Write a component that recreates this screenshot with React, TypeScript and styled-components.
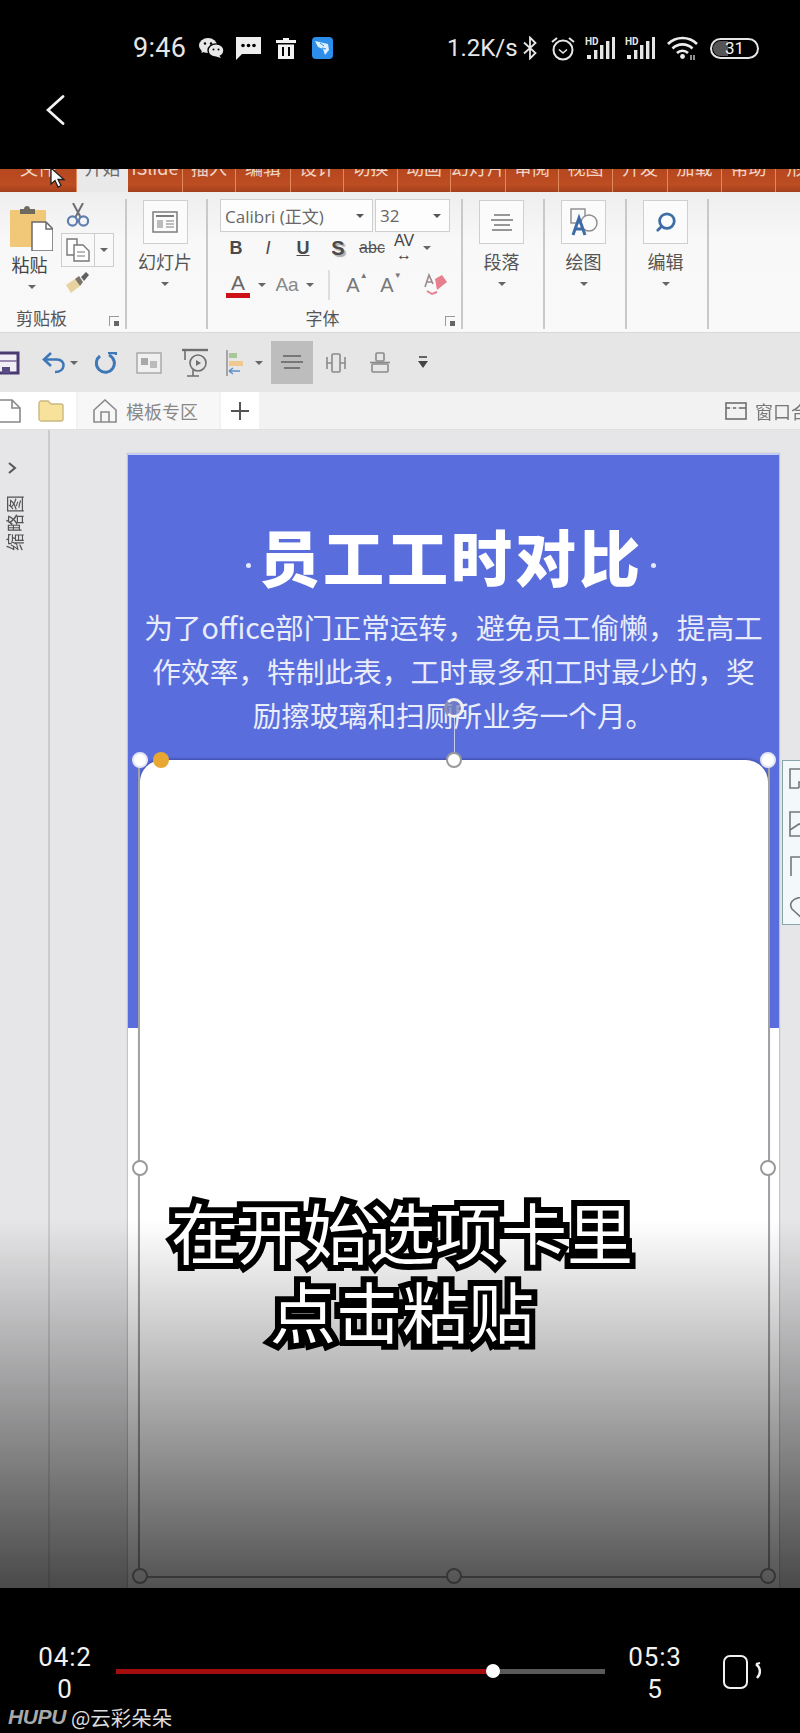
import styled, { createGlobalStyle } from "styled-components";
import { Search } from "lucide-react";

const GlobalStyle = createGlobalStyle`
  html, body {
    margin: 0;
    padding: 0;
    background: #000;
    font-family: "Noto Sans CJK SC", "Noto Sans", sans-serif;
  }
`;

const Page = styled.div`
  width: 800px;
  height: 1733px;
  background: #000;
  display: flex;
  flex-direction: column;
  overflow: hidden;
`;

/* ---------- phone header ---------- */

const Header = styled.div`
  height: 169px;
  flex: none;
  padding-top: 36px;
  box-sizing: border-box;
`;

const StatusBar = styled.div`
  height: 24px;
  display: flex;
  align-items: center;
  padding-left: 133px;
  color: #e6e6e6;
  font-family: Roboto, sans-serif;
`;

const StatusTime = styled.span`
  font-size: 27px;
  width: 66px;
  letter-spacing: 0.3px;
`;

const StatusGap = styled.span<{ $w: number }>`
  width: ${(p) => p.$w}px;
  flex: none;
`;

const StatusSpeed = styled.span`
  font-size: 24px;
  width: 76px;
  white-space: nowrap;
`;

const BackRow = styled.div`
  height: 40px;
  margin-top: 30px;
  padding-left: 46px;
  display: flex;
  align-items: center;
`;

/* ---------- video frame ---------- */

const VideoFrame = styled.div`
  height: 1419px;
  flex: none;
  position: relative;
  overflow: hidden;
  display: flex;
  flex-direction: column;
  background: #e6e5e7;
`;

const Blurred = styled.div`
  display: flex;
  flex-direction: column;
  flex: 1;
  min-height: 0;
  filter: blur(0.7px);
`;

const TabStrip = styled.div`
  height: 23px;
  flex: none;
  display: flex;
  overflow: hidden;
  position: relative;
  background: linear-gradient(180deg, #b5471f 0%, #bd4d22 70%, #a2401c 100%);
`;

const Tab = styled.div<{ $w: number; $active?: boolean }>`
  width: ${(p) => p.$w}px;
  flex: none;
  box-sizing: border-box;
  text-align: center;
  font-size: 18px;
  line-height: 22px;
  color: ${(p) => (p.$active ? "#6a6a6a" : "#f0d5c6")};
  background: ${(p) => (p.$active ? "#e9e9e9" : "transparent")};
  border-right: ${(p) => (p.$active ? "none" : "1px solid #e08a5c")};
  white-space: nowrap;
  overflow: hidden;

  span {
    display: block;
    margin-top: -13px;
  }
`;

const Ribbon = styled.div`
  height: 141px;
  flex: none;
  display: flex;
  background: linear-gradient(180deg, #eeeeee 0%, #f8f8f8 35%, #f9f9f9 100%);
  border-bottom: 1px solid #d8d8d8;
  box-sizing: border-box;
  padding-top: 7px;
`;

const Group = styled.div<{ $w: number }>`
  width: ${(p) => p.$w}px;
  height: 130px;
  flex: none;
  position: relative;
  box-sizing: border-box;
  border-right: 2px solid #c9c9c9;
  display: flex;
  flex-direction: column;
`;

const GroupLabel = styled.div<{ $inset: number }>`
  position: absolute;
  left: 0;
  right: ${(p) => p.$inset}px;
  bottom: -2px;
  height: 26px;
  line-height: 26px;
  text-align: center;
  font-size: 17px;
  color: #555;
`;

const Launcher = styled.div`
  position: absolute;
  right: 6px;
  bottom: 3px;
  width: 9px;
  height: 9px;
  border-left: 1.5px solid #999;
  border-top: 1.5px solid #999;

  &::after {
    content: "";
    position: absolute;
    right: 0;
    bottom: 0;
    width: 5px;
    height: 5px;
    background: #666;
  }
`;

const BigCommand = styled.div`
  display: flex;
  flex-direction: column;
  align-items: center;
  padding: 1px 3px 0 0;
`;

const CommandBox = styled.div`
  width: 45px;
  height: 44px;
  box-sizing: border-box;
  border: 1.5px solid #cfcfcf;
  background: #fbfbfb;
  display: flex;
  align-items: center;
  justify-content: center;
`;

const CommandText = styled.div`
  font-size: 18px;
  line-height: 24px;
  margin-top: 5px;
  color: #555;
`;

const Caret = styled.div<{ $color?: string }>`
  width: 0;
  height: 0;
  border-left: 4px solid transparent;
  border-right: 4px solid transparent;
  border-top: 4.5px solid ${(p) => p.$color || "#666"};
`;

const CommandCaret = styled(Caret)`
  margin-top: 9px;
`;

const ClipboardBody = styled.div`
  display: flex;
  padding-left: 10px;
`;

const PasteColumn = styled.div`
  width: 43px;
  display: flex;
  flex-direction: column;
  align-items: center;
  padding-top: 6px;
`;

const PasteText = styled.div`
  font-size: 18px;
  line-height: 24px;
  margin: 1px 0 0 -4px;
  color: #444;
  white-space: nowrap;
`;

const PasteCaret = styled(Caret)`
  margin-top: 9px;
`;

const ClipTools = styled.div`
  margin-left: 8px;
  display: flex;
  flex-direction: column;
  align-items: flex-start;
  padding-top: 4px;
`;

const ToolIcon = styled.div`
  height: 22px;
  padding-left: 5px;
`;

const CopySplit = styled.div`
  margin-top: 8px;
  display: flex;
  height: 34px;
  border: 1.5px solid #cdcdcd;
  box-sizing: border-box;
  background: #f9f9f9;
`;

const CopyPart = styled.div`
  width: 32px;
  display: flex;
  align-items: center;
  justify-content: center;
  border-right: 1.5px solid #cdcdcd;
`;

const CopyCaret = styled.div`
  width: 18px;
  display: flex;
  align-items: center;
  justify-content: center;
`;

const BrushIcon = styled.div`
  margin-top: 5px;
  padding-left: 4px;
`;

const FontBody = styled.div`
  padding-left: 12px;
  display: flex;
  flex-direction: column;
`;

const SelectRow = styled.div`
  display: flex;
  gap: 2px;
  height: 33px;
`;

const SelectBox = styled.div<{ $w: number }>`
  width: ${(p) => p.$w}px;
  box-sizing: border-box;
  border: 1.5px solid #cfcfcf;
  background: #fdfdfd;
  display: flex;
  align-items: center;
  justify-content: space-between;
  padding: 0 8px 0 4px;
  font-family: "Open Sans", "Noto Sans CJK SC", sans-serif;
  font-size: 17px;
  color: #666;
  white-space: nowrap;
`;

const ToolRow = styled.div<{ $h: number }>`
  display: flex;
  align-items: center;
  height: ${(p) => p.$h}px;
`;

const ToolCell = styled.div<{ $w: number; $bold?: boolean; $italic?: boolean; $under?: boolean }>`
  width: ${(p) => p.$w}px;
  flex: none;
  display: flex;
  align-items: center;
  justify-content: center;
  font-family: "Liberation Sans", sans-serif;
  font-size: 18px;
  color: #4a4a4a;
  font-weight: ${(p) => (p.$bold ? 700 : 400)};
  font-style: ${(p) => (p.$italic ? "italic" : "normal")};
  text-decoration: ${(p) => (p.$under ? "underline" : "none")};
`;

const ShadowS = styled.span`
  text-shadow: 2px 2px 1px #aaa;
  font-size: 20px;
`;

const Strike = styled.span`
  text-decoration: line-through;
  font-size: 16px;
  color: #555;
`;

const ColorA = styled.div`
  display: flex;
  flex-direction: column;
  align-items: center;
  font-size: 21px;
  line-height: 20px;
  color: #666;
`;

const ColorBar = styled.div`
  width: 24px;
  height: 5px;
  background: #cc1216;
`;

const AaText = styled.span`
  font-size: 19px;
  color: #888;
`;

const Divider = styled.div`
  width: 2px;
  height: 30px;
  background: #dedede;
`;

const Grow = styled.span`
  position: relative;
  font-size: 20px;
  color: #777;

  sup {
    position: absolute;
    top: -3px;
    right: -8px;
    font-size: 8px;
    line-height: 10px;
  }
`;

const AvText = styled.span`
  font-size: 16px;
  line-height: 14px;
  color: #444;
  display: flex;
  flex-direction: column;
  align-items: center;
`;

const QuickBar = styled.div`
  height: 59px;
  flex: none;
  background: #e6e6e7;
  display: flex;
  align-items: center;
`;

const QuickItem = styled.div<{ $w: number; $selected?: boolean }>`
  width: ${(p) => p.$w}px;
  flex: none;
  height: 43px;
  display: flex;
  align-items: center;
  justify-content: center;
  background: ${(p) => (p.$selected ? "#bdbdbd" : "transparent")};
`;

const DocTabs = styled.div`
  height: 38px;
  flex: none;
  display: flex;
  background: #f2f2f2;
  border-bottom: 1px solid #e0e0e0;
  box-sizing: border-box;
`;

const DocIcons = styled.div`
  width: 76px;
  background: #fff;
  display: flex;
  align-items: center;
  gap: 16px;
  flex: none;
  padding-left: 0;
`;

const DocTab = styled.div`
  width: 141px;
  margin-left: 2px;
  background: #f7f7f7;
  display: flex;
  align-items: center;
  padding-left: 15px;
  gap: 9px;
  box-sizing: border-box;
  flex: none;
  font-size: 18px;
  color: #888;
`;

const PlusTab = styled.div`
  width: 38px;
  margin-left: 2px;
  background: #fff;
  flex: none;
  display: flex;
  align-items: center;
  justify-content: center;
`;

const WindowTab = styled.div`
  margin-left: auto;
  display: flex;
  align-items: center;
  gap: 8px;
  font-size: 18px;
  color: #777;
  white-space: nowrap;
  width: 75px;
  flex: none;

  svg {
    flex: none;
  }
`;

const Workspace = styled.div`
  flex: 1;
  min-height: 0;
  display: flex;
  background: #e6e5e7;
  position: relative;
`;

const ThumbRail = styled.div`
  width: 50px;
  flex: none;
  box-sizing: border-box;
  border-right: 2px solid #cbcbcb;
  padding: 32px 0 0 8px;
  display: flex;
  flex-direction: column;
  gap: 20px;
  color: #555;
`;

const RailText = styled.div`
  writing-mode: vertical-rl;
  text-orientation: sideways;
  transform: rotate(180deg);
  font-size: 18px;
  line-height: 18px;
  letter-spacing: 1px;
  color: #555;
  margin-left: -3px;
  filter: blur(0.5px);
`;

const SlideArea = styled.div`
  flex: 1;
  padding: 23px 0 0 78px;
`;

const Slide = styled.div`
  width: 651px;
  height: 1135px;
  position: relative;
  background: #fff;
  box-shadow: -1px 0 1px #c4c4c4, 1px 0 1px #c4c4c4;
`;

const BlueBand = styled.div`
  height: 575px;
  background: #5a6ddc;
  border-top: 2px solid #c5ccf5;
  box-sizing: border-box;
  padding-top: 61px;
  display: flex;
  flex-direction: column;
  align-items: center;
`;

const TitleRow = styled.div`
  display: flex;
  align-items: center;
  gap: 8px;
  height: 80px;
  margin-left: -5px;
`;

const TitleDot = styled.span`
  width: 5px;
  height: 5px;
  border-radius: 50%;
  background: #e4e9ff;
  margin-top: 18px;
`;

const TitleText = styled.div`
  font-size: 61px;
  font-weight: 900;
  letter-spacing: 3px;
  line-height: 80px;
  color: #fff;
  white-space: nowrap;
`;

const BodyText = styled.div`
  margin-top: 9px;
  text-align: center;
  font-size: 28.7px;
  line-height: 44px;
  color: #e9edfb;
  white-space: nowrap;
`;

const BodyLine = styled.div`
  display: block;
`;

const Card = styled.div`
  position: absolute;
  left: 12px;
  right: 11px;
  top: 307px;
  height: 816px;
  background: #fff;
  border-radius: 22px 22px 0 0;
  box-shadow: 0 -1px 3px #3d49a5;
`;

const SelectionFrame = styled.div`
  position: absolute;
  left: 10px;
  top: 307px;
  width: 632px;
  height: 818px;
  box-sizing: border-box;
  border: 2px solid #a2a2a4;
  border-top: none;
`;

const Handle = styled.div<{ $x: number; $y: number; $soft?: boolean }>`
  position: absolute;
  left: ${(p) => p.$x}%;
  top: ${(p) => p.$y}%;
  width: 16px;
  height: 16px;
  margin: -8px 0 0 -8px;
  box-sizing: border-box;
  border-radius: 50%;
  background: #fff;
  border: 2.5px solid ${(p) => (p.$soft ? "#e4e6f5" : "#9a9a9a")};
`;

const AdjustHandle = styled.div`
  position: absolute;
  left: 13px;
  top: 0;
  width: 16px;
  height: 16px;
  margin-top: -8px;
  border-radius: 50%;
  background: #e8a733;
`;

const RotateStem = styled.div`
  position: absolute;
  left: 50%;
  top: -44px;
  width: 1px;
  height: 36px;
  background: #c8cbe6;
`;

const RotateHandle = styled.div`
  position: absolute;
  left: 50%;
  top: -62px;
  width: 20px;
  height: 20px;
  margin-left: -10px;
  box-sizing: border-box;
  border-radius: 50%;
  border: 3.5px solid #f0f0f0;
  border-left-color: #8b8fb5;
  background: rgba(120, 128, 190, 0.75);
`;

const SidePanel = styled.div`
  position: absolute;
  left: 782px;
  top: 330px;
  width: 30px;
  height: 165px;
  box-sizing: border-box;
  border: 1.5px solid #86a5a8;
  background: #f3f9fb;
  display: flex;
  flex-direction: column;
  padding: 7px 0 0 6px;
  gap: 19px;
`;

const BottomFade = styled.div`
  position: absolute;
  left: 0;
  right: 0;
  bottom: 0;
  height: 368px;
  background: linear-gradient(180deg, rgba(0, 0, 0, 0) 0%, rgba(0, 0, 0, 0.68) 100%);
`;

const Caption = styled.div`
  position: absolute;
  left: 0;
  width: 804px;
  top: 1022px;
  text-align: center;
  font-size: 66px;
  line-height: 79px;
  font-weight: 400;
  color: #fff;
  -webkit-text-stroke: 12px #000;
  paint-order: stroke fill;
`;

const CursorWrap = styled.div`
  position: absolute;
  left: 49px;
  top: -2px;
`;

/* ---------- player controls ---------- */

const Controls = styled.div`
  flex: 1;
  display: flex;
  flex-direction: column;
  padding-top: 53px;
  box-sizing: border-box;
`;

const PlayerRow = styled.div`
  display: flex;
  align-items: center;
  padding-left: 33px;
`;

const TimeLabel = styled.div`
  width: 64px;
  flex: none;
  text-align: center;
  font-family: Roboto, sans-serif;
  font-size: 26px;
  line-height: 32px;
  letter-spacing: 0.9px;
  color: #f2f2f2;
  word-break: break-all;
`;

const Track = styled.div`
  width: 489px;
  height: 5px;
  margin: 0 18px 4px 19px;
  background: #5a5a5a;
  flex: none;
  position: relative;
`;

const TrackFill = styled.div`
  height: 100%;
  background: #a50d0d;
`;

const TrackThumb = styled.div`
  position: absolute;
  top: -4.5px;
  width: 14px;
  height: 14px;
  margin-left: -7px;
  border-radius: 50%;
  background: #fff;
`;

const RotateButton = styled.div`
  margin-left: 36px;
  margin-bottom: 2px;
  height: 34px;
`;

const Watermark = styled.div`
  padding-left: 8px;
  height: 24px;
  display: flex;
  align-items: center;
  gap: 5px;
  font-size: 20.5px;
  color: #dcdcdc;
  white-space: nowrap;
`;

const WatermarkBrand = styled.span`
  font-family: "Liberation Sans", sans-serif;
  font-weight: 700;
  font-style: italic;
  font-size: 21px;
  letter-spacing: -0.4px;
  color: #a9a9a9;
`;

/* ---------- drawn icons ---------- */

const WeChatIcon = () => (
  <svg width="25" height="20" viewBox="0 0 25 20">
    <ellipse cx="9" cy="7.5" rx="9" ry="7.5" fill="#e8e8e8" />
    <path d="M3 11 L2.5 15 L7 13 Z" fill="#e8e8e8" />
    <circle cx="6" cy="5.5" r="1.2" fill="#000" />
    <circle cx="12" cy="5.5" r="1.2" fill="#000" />
    <ellipse cx="17" cy="12.5" rx="8" ry="6.6" fill="#e8e8e8" stroke="#000" strokeWidth="1.4" />
    <path d="M20 17 L22 20 L17 18.5 Z" fill="#e8e8e8" />
    <circle cx="14.5" cy="11.5" r="1" fill="#000" />
    <circle cx="19.5" cy="11.5" r="1" fill="#000" />
  </svg>
);

const MessageIcon = () => (
  <svg width="25" height="23" viewBox="0 0 25 23">
    <path d="M0 0 H25 V17 H6 L0 23 Z" fill="#eeeeee" />
    <circle cx="7" cy="8.5" r="1.8" fill="#000" />
    <circle cx="12.5" cy="8.5" r="1.8" fill="#000" />
    <circle cx="18" cy="8.5" r="1.8" fill="#000" />
  </svg>
);

const TrashIcon = () => (
  <svg width="20" height="21" viewBox="0 0 20 21">
    <path d="M7 0 H13 V2 H20 V5 H0 V2 H7 Z" fill="#f2f2f2" />
    <path d="M2 6.5 H18 V21 H2 Z" fill="#f2f2f2" />
    <path d="M7 9 V18 M13 9 V18" stroke="#000" strokeWidth="2" />
  </svg>
);

const BlueAppIcon = () => (
  <svg width="21" height="22" viewBox="0 0 21 22">
    <rect width="21" height="22" rx="4" fill="#2c8eea" />
    <path d="M3 4 L16 7 L17 13 L13 18 L11 12 L6 10 Z" fill="#dcefff" />
    <path d="M8 6 L12 9 M10 11 L14 12" stroke="#2c8eea" strokeWidth="1" />
  </svg>
);

const BluetoothIcon = () => (
  <svg width="14" height="24" viewBox="0 0 14 24" fill="none" stroke="#e6e6e6" strokeWidth="1.8">
    <path d="M1 6.5 L12.5 17 L7 22.5 V1.5 L12.5 7 L1 17.5" />
  </svg>
);

const AlarmIcon = () => (
  <svg width="26" height="25" viewBox="0 0 26 25" fill="none" stroke="#e6e6e6" strokeWidth="2">
    <circle cx="13" cy="14" r="9.5" />
    <path d="M9 13.5 L13 17 L17 13.5" strokeWidth="1.6" />
    <path d="M2 6 L7 2 M24 6 L19 2" />
  </svg>
);

const SignalIcon = () => (
  <svg width="30" height="24" viewBox="0 0 30 24">
    <text x="0" y="9" fontSize="10" fontWeight="700" fontFamily="Roboto, sans-serif" fill="#e6e6e6">HD</text>
    <rect x="2" y="19" width="4" height="4" fill="#e6e6e6" />
    <rect x="9" y="14" width="3.4" height="9" fill="#e6e6e6" />
    <rect x="15" y="9" width="3.4" height="14" fill="#e6e6e6" />
    <rect x="21" y="5" width="3.4" height="18" fill="#e6e6e6" />
    <rect x="27" y="1" width="3" height="22" fill="#e6e6e6" />
  </svg>
);

const WifiIcon = () => (
  <svg width="31" height="24" viewBox="0 0 31 24" fill="none" stroke="#ececec" strokeWidth="2.6">
    <path d="M1 8 C9 0 22 0 30 8" />
    <path d="M5.5 12.5 C11 7 20 7 25.5 12.5" />
    <path d="M10 17 C13 14 18 14 21 17" />
    <circle cx="15.5" cy="20.5" r="2.4" fill="#ececec" stroke="none" />
    <path d="M24 19 V24 M27 19 V24" strokeWidth="1.2" />
  </svg>
);

const BatteryBox = styled.div`
  width: 49px;
  height: 21px;
  box-sizing: border-box;
  border: 2px solid #e6e6e6;
  border-radius: 11px;
  position: relative;
  text-align: center;
  font-size: 17px;
  line-height: 17px;
  color: #f2f2f2;
  overflow: hidden;

  &::before {
    content: "";
    position: absolute;
    left: 1px;
    top: 1px;
    bottom: 1px;
    width: 15px;
    border-radius: 8px 0 0 8px;
    background: #555;
  }

  span {
    position: relative;
  }
`;

const BackIcon = () => (
  <svg width="20" height="30" viewBox="0 0 20 30" fill="none" stroke="#f2f2f2" strokeWidth="2.8" strokeLinecap="round">
    <path d="M17 1.5 L2 15 L17 28.5" />
  </svg>
);

const CursorIcon = () => (
  <svg width="18" height="24" viewBox="0 0 18 24">
    <path d="M2 1 L2 17 L6 13.5 L9 20 L12 18.5 L9 12.5 L15 12.5 Z" fill="#fff" stroke="#222" strokeWidth="1.3" />
  </svg>
);

const ClipboardIcon = () => (
  <svg width="43" height="46" viewBox="0 0 43 46">
    <rect x="0" y="5" width="36" height="37" rx="1" fill="#f0c877" />
    <path d="M10 4 H14 C14 0 20 0 20 4 H25 V9 H10 Z" fill="#6f6a60" />
    <path d="M22 17 H36 L43 24 V46 H22 Z" fill="#fff" stroke="#6a6a6a" strokeWidth="1.5" />
    <path d="M36 17 V24 H43" fill="none" stroke="#6a6a6a" strokeWidth="1.5" />
  </svg>
);

const ScissorsIcon = () => (
  <svg width="24" height="24" viewBox="0 0 24 24" fill="none">
    <path d="M7 0 L15 15 M17 0 L9 15" stroke="#6d6d75" strokeWidth="2" />
    <circle cx="6.5" cy="18" r="4.6" stroke="#5f7fae" strokeWidth="2.2" />
    <circle cx="17.5" cy="18" r="4.6" stroke="#5f7fae" strokeWidth="2.2" />
  </svg>
);

const CopyIcon = () => (
  <svg width="24" height="24" viewBox="0 0 24 24" fill="#fff" stroke="#777" strokeWidth="1.4">
    <path d="M1 1 H11 V17 H1 Z" />
    <path d="M8 7 H17 L23 13 V23 H8 Z" />
    <path d="M11 14 H19 M11 18 H19" strokeWidth="1" />
  </svg>
);

const BrushIconSvg = () => (
  <svg width="24" height="22" viewBox="0 0 24 22">
    <path d="M1 13 L10 7 L15 14 L6 21 Z" fill="#e6d3a0" />
    <path d="M10 7 L14 4 L18 10 L15 14 Z" fill="#7b7468" />
    <path d="M16 5 L21 0 L24 3 L19 9 Z" fill="#5f5f5f" />
  </svg>
);

const SlideLayoutIcon = () => (
  <svg width="26" height="22" viewBox="0 0 26 22" fill="none" stroke="#7d7d7d" strokeWidth="1.5">
    <rect x="1" y="1" width="24" height="20" />
    <path d="M4 5 H22" strokeWidth="2" />
    <path d="M5 9 H11 V17 H5 Z" fill="#bbb" stroke="none" />
    <path d="M14 10 H22 M14 13 H22 M14 16 H22" strokeWidth="1" />
  </svg>
);

const ParagraphIcon = () => (
  <svg width="22" height="18" viewBox="0 0 22 18" stroke="#777" strokeWidth="1.7">
    <path d="M3 2 H19 M0 7 H22 M3 12 H19 M1 17 H21" />
  </svg>
);

const DrawIcon = () => (
  <svg width="28" height="28" viewBox="0 0 28 28" fill="none">
    <rect x="1" y="1" width="14" height="14" stroke="#8c8c8c" strokeWidth="1.4" />
    <circle cx="19" cy="15" r="8" fill="#fbfbfb" stroke="#8c8c8c" strokeWidth="1.4" />
    <path d="M3 27 L9 10 L15 27 M5.5 21 H12.5" stroke="#3e6da6" strokeWidth="3" fill="none" />
  </svg>
);

const SaveIcon = () => (
  <svg width="20" height="24" viewBox="0 0 20 24" fill="none">
    <path d="M-3 2 H18 V22 H-3 Z" fill="#f1eef6" stroke="#4a3a72" strokeWidth="3" />
    <path d="M-2 10 H17" stroke="#7d6a9e" strokeWidth="1.5" />
    <rect x="2" y="16" width="8" height="6" fill="#5a4a82" />
  </svg>
);

const UndoIcon = () => (
  <svg width="24" height="22" viewBox="0 0 24 22" fill="none" stroke="#3f78b8" strokeWidth="2.6">
    <path d="M9 1 L2 7.5 L9 14" />
    <path d="M3 7.5 H15 C24 7.5 24 20 13 20" />
  </svg>
);

const RedoIcon = () => (
  <svg width="22" height="22" viewBox="0 0 22 22" fill="none" stroke="#3f78b8" strokeWidth="3">
    <path d="M14 3 A9 9 0 1 1 5 4" />
    <path d="M13 1 H21 V3" strokeWidth="2.4" />
  </svg>
);

const PictureIcon = () => (
  <svg width="26" height="22" viewBox="0 0 26 22">
    <rect x="1" y="1" width="24" height="20" fill="#f0f0f0" stroke="#a4a4a4" strokeWidth="1.4" />
    <rect x="5" y="6" width="7" height="7" fill="#a8a8a8" />
    <rect x="14" y="9" width="7" height="7" fill="#bcbcbc" />
  </svg>
);

const PresentIcon = () => (
  <svg width="26" height="30" viewBox="0 0 26 30" fill="none" stroke="#6f6f6f" strokeWidth="1.6">
    <path d="M0 2 H26" strokeWidth="2.4" />
    <path d="M3 2 V12" />
    <circle cx="16" cy="15" r="8" />
    <path d="M14 12 L19 15 L14 18 Z" fill="#6f6f6f" stroke="none" />
    <path d="M5 28 H17 M11 22 V28" />
  </svg>
);

const ArrangeIcon = () => (
  <svg width="18" height="26" viewBox="0 0 18 26">
    <path d="M1 0 V26" stroke="#888" strokeWidth="1.4" />
    <rect x="3" y="3" width="8" height="5" fill="#a9c89a" />
    <rect x="3" y="11" width="14" height="5" fill="#efc98d" />
    <path d="M3 21 H14 M3 21 L7 18 M3 21 L7 24" stroke="#5d8ec7" strokeWidth="1.5" fill="none" />
  </svg>
);

const AlignLinesIcon = () => (
  <svg width="22" height="18" viewBox="0 0 22 18" stroke="#777" strokeWidth="2">
    <path d="M2 2 H20 M0 8 H22 M3 14 H19" />
  </svg>
);

const DistributeH = () => (
  <svg width="20" height="24" viewBox="0 0 20 24" fill="none" stroke="#8a8a8a" strokeWidth="1.6">
    <rect x="6" y="3" width="8" height="18" rx="1" />
    <path d="M1 12 H6 M14 12 H19 M1 6 V18 M19 6 V18" />
  </svg>
);

const DistributeV = () => (
  <svg width="20" height="24" viewBox="0 0 20 24" fill="none" stroke="#8a8a8a" strokeWidth="1.6">
    <rect x="6" y="2" width="8" height="8" rx="1" />
    <rect x="2" y="13" width="16" height="8" rx="1" />
    <path d="M0 11.5 H20" />
  </svg>
);

const MoreIcon = () => (
  <svg width="10" height="14" viewBox="0 0 10 14">
    <path d="M1 1 H9" stroke="#444" strokeWidth="1.6" />
    <path d="M0 5 H10 L5 12 Z" fill="#444" />
  </svg>
);

const NewFileIcon = () => (
  <svg width="22" height="24" viewBox="0 0 22 24" fill="#fff" stroke="#888" strokeWidth="1.6">
    <path d="M-2 1 H12 L20 9 V23 H-2" />
    <path d="M12 1 V9 H20" fill="none" />
  </svg>
);

const FolderIcon = () => (
  <svg width="26" height="22" viewBox="0 0 26 22">
    <path d="M1 3 C1 2 2 1 3 1 H10 L13 4 H23 C24 4 25 5 25 6 V19 C25 20 24 21 23 21 H3 C2 21 1 20 1 19 Z" fill="#f8e19a" stroke="#c9b880" strokeWidth="1.4" />
  </svg>
);

const HomeIcon = () => (
  <svg width="24" height="24" viewBox="0 0 24 24" fill="none" stroke="#8a8a8a" strokeWidth="1.6">
    <path d="M1 11 L12 1 L23 11 V23 H1 Z" />
    <path d="M8 23 V13 H16 V23" />
  </svg>
);

const PlusIcon = () => (
  <svg width="18" height="18" viewBox="0 0 18 18" stroke="#555" strokeWidth="2">
    <path d="M9 0 V18 M0 9 H18" />
  </svg>
);

const WindowIcon = () => (
  <svg width="22" height="18" viewBox="0 0 22 18" fill="none" stroke="#6f6f6f" strokeWidth="1.6">
    <rect x="1" y="1" width="20" height="16" />
    <path d="M1 6 H21" />
    <path d="M5 6 H8 M11 6 H14" stroke="#fff" />
  </svg>
);

const RailChevron = () => (
  <svg width="9" height="12" viewBox="0 0 9 12" fill="none" stroke="#555" strokeWidth="2">
    <path d="M1 1 L7 6 L1 11" />
  </svg>
);

const PanelCopy = () => (
  <svg width="22" height="24" viewBox="0 0 22 24" fill="none" stroke="#777" strokeWidth="1.6">
    <path d="M18 1 H1 V20 H10" />
    <path d="M10 20 V14 H22" />
  </svg>
);

const PanelImage = () => (
  <svg width="22" height="26" viewBox="0 0 22 26" fill="none" stroke="#777" strokeWidth="1.6">
    <path d="M22 1 H1 V25 H22" />
    <path d="M1 19 L10 13 L22 18" />
  </svg>
);

const PanelCorner = () => (
  <svg width="22" height="22" viewBox="0 0 22 22" fill="none" stroke="#777" strokeWidth="1.6">
    <path d="M22 1 H2 V20" />
  </svg>
);

const PanelHeart = () => (
  <svg width="22" height="22" viewBox="0 0 22 22" fill="none" stroke="#777" strokeWidth="1.6">
    <path d="M22 1 C8 -2 -2 4 3 12 L16 24" />
  </svg>
);

const RotateScreenIcon = () => (
  <svg width="40" height="34" viewBox="0 0 40 34" fill="none" stroke="#f2f2f2">
    <rect x="1" y="1" width="23" height="32" rx="6" strokeWidth="2" />
    <path d="M33 9 C38 13 38 19 34 23" strokeWidth="2.4" />
    <path d="M33 9 L37 8" strokeWidth="2" />
  </svg>
);

const TABS = [
  { label: "文件", w: 77 },
  { label: "开始", w: 51, active: true },
  { label: "iSlide", w: 55 },
  { label: "插入", w: 53 },
  { label: "编辑", w: 55 },
  { label: "设计", w: 53 },
  { label: "切换", w: 54 },
  { label: "动画", w: 53 },
  { label: "幻灯片", w: 55 },
  { label: "审阅", w: 53 },
  { label: "视图", w: 54 },
  { label: "开发", w: 55 },
  { label: "加载", w: 54 },
  { label: "帮助", w: 54 },
  { label: "形", w: 40 },
];

const PROGRESS = 77;

export default function App() {
  return (
    <Page>
      <GlobalStyle />
      <Header>
        <StatusBar>
          <StatusTime>9:46</StatusTime>
          <WeChatIcon />
          <StatusGap $w={12} />
          <MessageIcon />
          <StatusGap $w={15} />
          <TrashIcon />
          <StatusGap $w={16} />
          <BlueAppIcon />
          <StatusGap $w={114} />
          <StatusSpeed>1.2K/s</StatusSpeed>
          <BluetoothIcon />
          <StatusGap $w={13} />
          <AlarmIcon />
          <StatusGap $w={9} />
          <SignalIcon />
          <StatusGap $w={10} />
          <SignalIcon />
          <StatusGap $w={12} />
          <WifiIcon />
          <StatusGap $w={12} />
          <BatteryBox><span>31</span></BatteryBox>
        </StatusBar>
        <BackRow>
          <BackIcon />
        </BackRow>
      </Header>

      <VideoFrame>
        <Blurred>
          <TabStrip>
            {TABS.map((tab) => (
              <Tab key={tab.label} $w={tab.w} $active={tab.active}>
                <span>{tab.label}</span>
              </Tab>
            ))}
            <CursorWrap>
              <CursorIcon />
            </CursorWrap>
          </TabStrip>

          <Ribbon>
            <Group $w={127}>
              <ClipboardBody>
                <PasteColumn>
                  <ClipboardIcon />
                  <PasteText>粘贴</PasteText>
                  <PasteCaret />
                </PasteColumn>
                <ClipTools>
                  <ToolIcon>
                    <ScissorsIcon />
                  </ToolIcon>
                  <CopySplit>
                    <CopyPart>
                      <CopyIcon />
                    </CopyPart>
                    <CopyCaret>
                      <Caret />
                    </CopyCaret>
                  </CopySplit>
                  <BrushIcon>
                    <BrushIconSvg />
                  </BrushIcon>
                </ClipTools>
              </ClipboardBody>
              <GroupLabel $inset={42}>剪贴板</GroupLabel>
              <Launcher />
            </Group>

            <Group $w={81}>
              <BigCommand>
                <CommandBox>
                  <SlideLayoutIcon />
                </CommandBox>
                <CommandText>幻灯片</CommandText>
                <CommandCaret />
              </BigCommand>
            </Group>

            <Group $w={255}>
              <FontBody>
                <SelectRow>
                  <SelectBox $w={153}>
                    Calibri (正文)
                    <Caret $color="#555" />
                  </SelectBox>
                  <SelectBox $w={75}>
                    32
                    <Caret $color="#555" />
                  </SelectBox>
                </SelectRow>
                <ToolRow $h={32}>
                  <ToolCell $w={32} $bold>B</ToolCell>
                  <ToolCell $w={32} $italic>I</ToolCell>
                  <ToolCell $w={38} $bold $under>U</ToolCell>
                  <ToolCell $w={32} $bold><ShadowS>S</ShadowS></ToolCell>
                  <ToolCell $w={36}><Strike>abc</Strike></ToolCell>
                  <ToolCell $w={28}>
                    <AvText>AV<span>↔</span></AvText>
                  </ToolCell>
                  <ToolCell $w={18}><Caret /></ToolCell>
                </ToolRow>
                <ToolRow $h={42}>
                  <ToolCell $w={36}>
                    <ColorA>A<ColorBar /></ColorA>
                  </ToolCell>
                  <ToolCell $w={12}><Caret /></ToolCell>
                  <ToolCell $w={38}><AaText>Aa</AaText></ToolCell>
                  <ToolCell $w={8}><Caret /></ToolCell>
                  <ToolCell $w={30}><Divider /></ToolCell>
                  <ToolCell $w={18}><Grow>A<sup>▲</sup></Grow></ToolCell>
                  <ToolCell $w={50}><Grow>A<sup>▼</sup></Grow></ToolCell>
                  <ToolCell $w={46}>
                    <svg width="24" height="24" viewBox="0 0 24 24">
                      <path d="M12 6 L19 2 L24 9 L14 17 Z" fill="#e77f8f" />
                      <path d="M4 18 L9 21 L14 19" stroke="#e77f8f" strokeWidth="2" fill="none" />
                      <path d="M2 14 L6 2 L10 11 M4 9 H9" stroke="#9a8a8a" strokeWidth="1.6" fill="none" />
                    </svg>
                  </ToolCell>
                </ToolRow>
              </FontBody>
              <GroupLabel $inset={24}>字体</GroupLabel>
              <Launcher />
            </Group>

            <Group $w={82}>
              <BigCommand>
                <CommandBox>
                  <ParagraphIcon />
                </CommandBox>
                <CommandText>段落</CommandText>
                <CommandCaret />
              </BigCommand>
            </Group>

            <Group $w={82}>
              <BigCommand>
                <CommandBox>
                  <DrawIcon />
                </CommandBox>
                <CommandText>绘图</CommandText>
                <CommandCaret />
              </BigCommand>
            </Group>

            <Group $w={82}>
              <BigCommand>
                <CommandBox>
                  <Search size={22} color="#3e6da6" strokeWidth={3} style={{ transform: "scaleX(-1)" }} />
                </CommandBox>
                <CommandText>编辑</CommandText>
                <CommandCaret />
              </BigCommand>
            </Group>
          </Ribbon>

          <QuickBar>
            <QuickItem $w={20}><SaveIcon /></QuickItem>
            <QuickItem $w={20} />
            <QuickItem $w={28}><UndoIcon /></QuickItem>
            <QuickItem $w={12}><Caret /></QuickItem>
            <QuickItem $w={52}><RedoIcon /></QuickItem>
            <QuickItem $w={34}><PictureIcon /></QuickItem>
            <QuickItem $w={58}><PresentIcon /></QuickItem>
            <QuickItem $w={22}><ArrangeIcon /></QuickItem>
            <QuickItem $w={25}><Caret /></QuickItem>
            <QuickItem $w={42} $selected><AlignLinesIcon /></QuickItem>
            <QuickItem $w={46}><DistributeH /></QuickItem>
            <QuickItem $w={42}><DistributeV /></QuickItem>
            <QuickItem $w={44}><MoreIcon /></QuickItem>
          </QuickBar>

          <DocTabs>
            <DocIcons>
              <NewFileIcon />
              <FolderIcon />
            </DocIcons>
            <DocTab>
              <HomeIcon />
              模板专区
            </DocTab>
            <PlusTab>
              <PlusIcon />
            </PlusTab>
            <WindowTab>
              <WindowIcon />
              窗口合
            </WindowTab>
          </DocTabs>

          <Workspace>
            <ThumbRail>
              <RailChevron />
              <RailText>缩略图</RailText>
            </ThumbRail>
            <SlideArea>
              <Slide>
                <BlueBand>
                  <TitleRow>
                    <TitleDot />
                    <TitleText>员工工时对比</TitleText>
                    <TitleDot />
                  </TitleRow>
                  <BodyText>
                    <BodyLine>为了office部门正常运转，避免员工偷懒，提高工</BodyLine>
                    <BodyLine>作效率，特制此表，工时最多和工时最少的，奖</BodyLine>
                    <BodyLine>励擦玻璃和扫厕所业务一个月。</BodyLine>
                  </BodyText>
                </BlueBand>
                <Card />
                <SelectionFrame>
                  <RotateStem />
                  <RotateHandle />
                  <Handle $x={0} $y={0} $soft />
                  <AdjustHandle />
                  <Handle $x={50} $y={0} />
                  <Handle $x={100} $y={0} $soft />
                  <Handle $x={0} $y={50} />
                  <Handle $x={100} $y={50} />
                  <Handle $x={0} $y={100} />
                  <Handle $x={50} $y={100} />
                  <Handle $x={100} $y={100} />
                </SelectionFrame>
              </Slide>
            </SlideArea>
            <SidePanel>
              <PanelCopy />
              <PanelImage />
              <PanelCorner />
              <PanelHeart />
            </SidePanel>
          </Workspace>
        </Blurred>
        <BottomFade />
        <Caption>
          在开始选项卡里
          <br />
          点击粘贴
        </Caption>
      </VideoFrame>

      <Controls>
        <PlayerRow>
          <TimeLabel>04:20</TimeLabel>
          <Track>
            <TrackFill style={{ width: `${PROGRESS}%` }} />
            <TrackThumb style={{ left: `${PROGRESS}%` }} />
          </Track>
          <TimeLabel>05:35</TimeLabel>
          <RotateButton>
            <RotateScreenIcon />
          </RotateButton>
        </PlayerRow>
        <Watermark>
          <WatermarkBrand>HUPU</WatermarkBrand>
          @云彩朵朵
        </Watermark>
      </Controls>
    </Page>
  );
}
